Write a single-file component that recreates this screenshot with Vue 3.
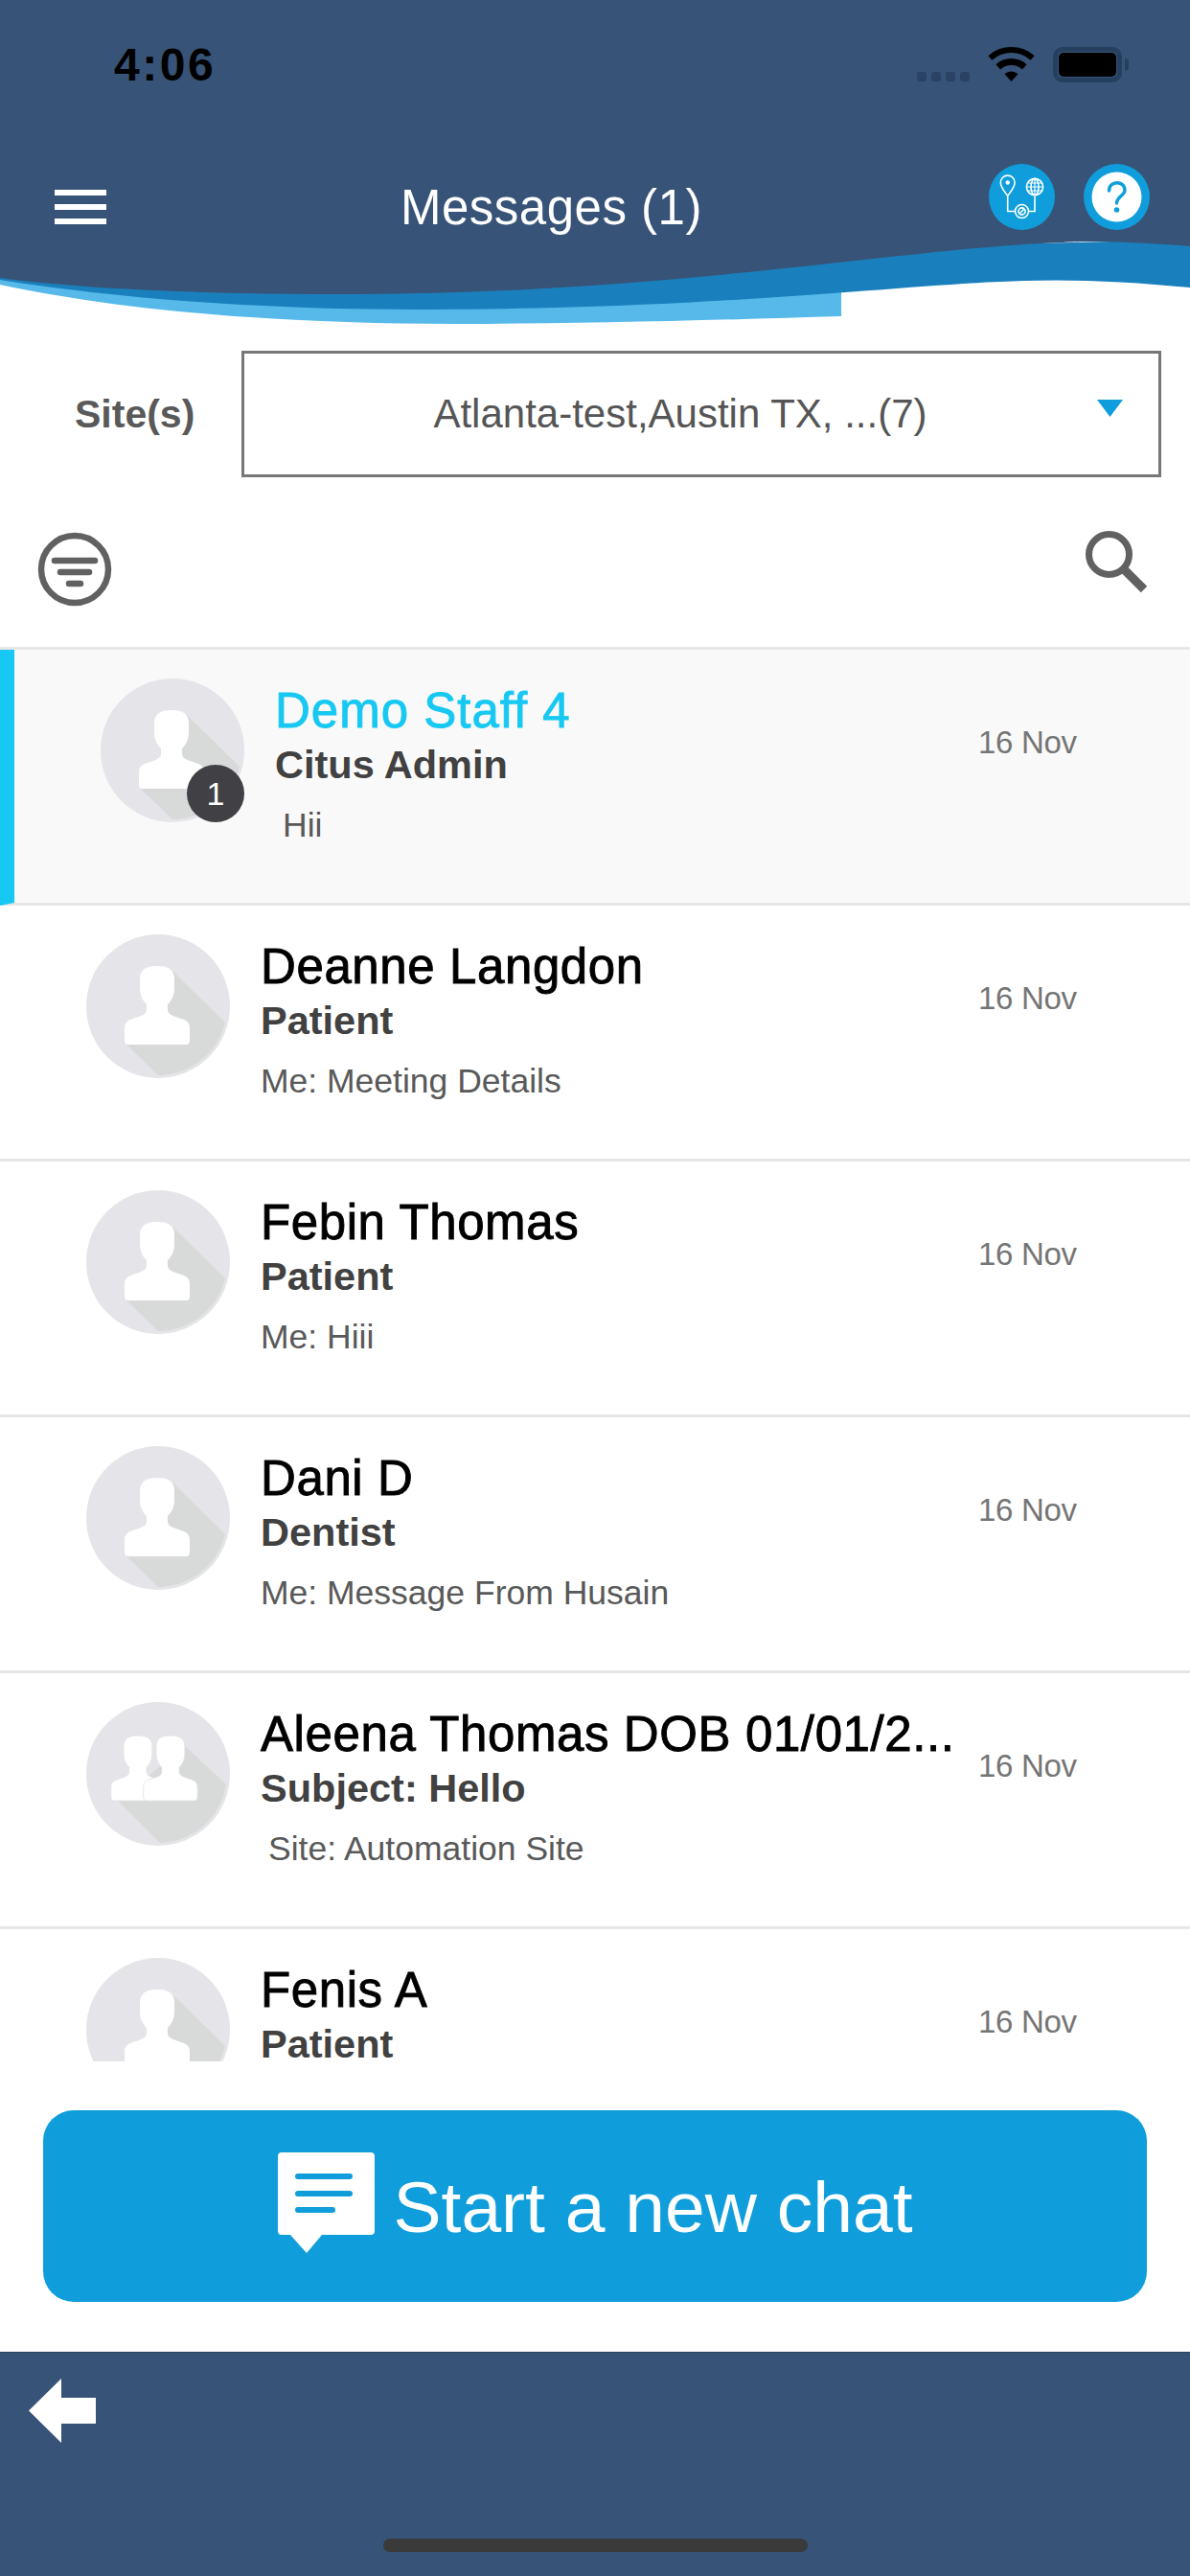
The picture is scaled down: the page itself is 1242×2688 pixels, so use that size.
<script setup>
const person = 'M74 33 C86 33 92 37 92 47 V56 C92 64 89 69 85 73 V79 C85 82 88 84 92 85.5 L102 89 C106 91 108 93 108 98 V111 Q108 115 104 115 H44 Q40 115 40 111 V98 C40 93 42 91 46 89 L56 85.5 C60 84 63 82 63 79 V73 C59 69 56 64 56 56 V47 C56 37 62 33 74 33 Z'

const rows = [
  { name: 'Demo Staff 4', role: 'Citus Admin', preview: 'Hii', active: true, badge: '1', inset: true },
  { name: 'Deanne Langdon', role: 'Patient', preview: 'Me: Meeting Details' },
  { name: 'Febin Thomas', role: 'Patient', preview: 'Me: Hiii' },
  { name: 'Dani D', role: 'Dentist', preview: 'Me: Message From Husain' },
  { name: 'Aleena Thomas DOB 01/01/2...', role: 'Subject: Hello', preview: 'Site: Automation Site', group: true, inset: true },
  { name: 'Fenis A', role: 'Patient', preview: '' }
]
</script>

<template>
  <div class="screen">
    <header class="top">
      <div class="status">
        <span class="time">4:06</span>
        <div class="status-icons">
          <div class="dots"><i></i><i></i><i></i><i></i></div>
          <svg class="wifi" width="47" height="36" viewBox="0 0 47 36">
            <path d="M-0.6 9.2 A36 36 0 0 1 47.6 9.2 L43.6 13.7 A30 30 0 0 0 3.4 13.7 Z" />
            <path d="M7.4 18.2 A24 24 0 0 1 39.6 18.2 L34.9 23.4 A17 17 0 0 0 12.1 23.4 Z" />
            <path d="M16.5 28.2 A10.5 10.5 0 0 1 30.5 28.2 L23.5 36 Z" />
          </svg>
          <div class="battery"><div class="cell"></div></div>
          <div class="nub"></div>
        </div>
      </div>
      <nav class="nav">
        <div class="burger"><i></i><i></i><i></i></div>
        <h1 class="title">Messages (1)</h1>
        <div class="nav-icons">
          <svg width="69" height="69" viewBox="0 0 69 69">
            <circle cx="34.5" cy="34.5" r="34.5" fill="#0f9edb" />
            <g fill="none" stroke="#fff" stroke-width="1.6">
              <path d="M19.7 33.5 C15 27 12.3 24 12.3 19.5 A7.4 7.4 0 0 1 27.1 19.5 C27.1 24 24.4 27 19.7 33.5 Z" />
              <circle cx="48" cy="24" r="8.6" />
              <ellipse cx="48" cy="24" rx="4" ry="8.6" />
              <path d="M48 15.4 V32.6 M39.4 24 H56.6 M40.6 20 H55.4 M40.6 28 H55.4" stroke-width="1.2" />
              <path d="M19.7 34 V49.5 H27.5 M41.5 49.5 H48 V34" />
              <circle cx="34.5" cy="49.5" r="7" />
              <circle cx="34.5" cy="49.5" r="3.6" />
              <path d="M32 52 L37 47" />
            </g>
            <circle cx="19.7" cy="19.5" r="2.2" fill="#fff" />
          </svg>
          <svg width="69" height="69" viewBox="0 0 69 69">
            <circle cx="34.5" cy="34.5" r="34.5" fill="#0f9edb" />
            <circle cx="34.5" cy="34.5" r="26" fill="#fff" />
            <path d="M26.5 28 C26.5 17 43 17 43 27.5 C43 33 34.5 34 34.5 41" fill="none" stroke="#0f9edb" stroke-width="3.4" stroke-linecap="round" />
            <circle cx="34.5" cy="48" r="2.8" fill="#0f9edb" />
          </svg>
        </div>
      </nav>
    </header>

    <svg class="wave" width="1242" height="90" viewBox="0 0 1242 90">
      <path fill="#56b9ea" d="M0 40 L878 40 L878 80 C750 84 600 88 475 88 C300 88 130 75 0 47 Z" />
      <path fill="#1a80bd" d="M0 30 L1242 0 L1242 50 C1180 44 1120 41 1069 43 C950 46 750 73 436 73 C250 73 100 58 0 42 Z" />
      <path fill="#375377" d="M0 -2 H1242 V7 C1180 2 1130 1 1109 3 C950 8 700 57 356 57 C220 57 90 52 0 40 Z" />
    </svg>

    <section class="site-row">
      <span class="site-label">Site(s)</span>
      <div class="site-box">
        <span class="site-value">Atlanta-test,Austin TX, ...(7)</span>
        <svg class="caret" width="27" height="18" viewBox="0 0 27 18"><path d="M0 0 H27 L13.5 18 Z" fill="#0f9edb" /></svg>
      </div>
    </section>

    <section class="tools">
      <svg width="78" height="78" viewBox="0 0 78 78">
        <circle cx="39" cy="39" r="35" fill="none" stroke="#616161" stroke-width="6.5" />
        <path d="M18 30 H60 M24 42 H54 M33 54 H45" stroke="#616161" stroke-width="6.5" stroke-linecap="round" />
      </svg>
      <svg width="66" height="66" viewBox="0 0 66 66">
        <circle cx="24.5" cy="24.5" r="21" fill="none" stroke="#616161" stroke-width="7" />
        <path d="M41 41 L61 61" stroke="#616161" stroke-width="9" />
      </svg>
    </section>

    <section class="list">
      <article v-for="row in rows" :key="row.name" class="row" :class="{ active: row.active }">
        <div class="avatar">
          <svg width="150" height="150" viewBox="0 0 150 150">
            <circle cx="75" cy="75" r="75" fill="#e5e5e9" />
            <template v-if="row.group">
              <path fill="#d8d9d9" d="M103 46 L146 86 A72 72 0 0 1 77 147 L33 103 Z" />
              <g fill="#fff" stroke="#e2e2e4" stroke-width="1">
                <path :d="person" transform="translate(-7.5 7.6) scale(0.83)" />
                <path :d="person" transform="translate(26.5 7.6) scale(0.83)" />
              </g>
            </template>
            <template v-else>
              <path fill="#d8d9d9" d="M90 38 L145 92 A72 72 0 0 1 75 147 L42 115 Z" />
              <path :d="person" fill="#fff" />
            </template>
          </svg>
          <span v-if="row.badge" class="badge">{{ row.badge }}</span>
        </div>
        <div class="body">
          <div class="name">{{ row.name }}</div>
          <div class="role">{{ row.role }}</div>
          <div v-if="row.preview" class="preview" :class="{ inset: row.inset }">{{ row.preview }}</div>
        </div>
        <time class="date">16 Nov</time>
      </article>
    </section>

    <section class="action">
      <button class="start" type="button">
        <svg width="101" height="105" viewBox="0 0 101 105">
          <path fill="#fff" d="M4 0 H97 Q101 0 101 4 V82 Q101 86 97 86 H46 L30 105 L13 86 H4 Q0 86 0 82 V4 Q0 0 4 0 Z" />
          <path d="M21 25 H75 M21 43 H75 M21 60 H57" stroke="#0f9edb" stroke-width="6" stroke-linecap="round" />
        </svg>
        <span class="start-label">Start a new chat</span>
      </button>
    </section>

    <footer class="bottom">
      <svg class="back" width="70" height="67" viewBox="0 0 70 67"><path fill="#fff" d="M0 33.5 L34 0 V20 H70 V47 H34 V67 Z" /></svg>
      <div class="home"></div>
    </footer>
  </div>
</template>

<style>
html, body { margin: 0; padding: 0; background: #fff; }
</style>

<style scoped>
.screen {
  width: 1242px;
  height: 2688px;
  display: flex;
  flex-direction: column;
  overflow: hidden;
  background: #fff;
  font-family: "Liberation Sans", Arial, sans-serif;
}
.top {
  height: 250px;
  flex: none;
  background: #375377;
  box-sizing: border-box;
  padding-top: 49px;
}
.status {
  height: 37px;
  display: flex;
  align-items: center;
  justify-content: space-between;
  padding-left: 119px;
  padding-right: 64px;
}
.time {
  font-size: 48px;
  line-height: 37px;
  font-weight: 700;
  color: #000;
  letter-spacing: 2.5px;
}
.status-icons { display: flex; align-items: flex-start; }
.dots { display: flex; gap: 5px; margin-top: 26px; margin-right: 20px; }
.dots i { width: 10px; height: 10px; border-radius: 3px; background: #2a4263; }
.wifi { fill: #000; margin-right: 20px; overflow: visible; }
.battery {
  width: 72px;
  height: 37px;
  box-sizing: border-box;
  border: 5px solid #25405f;
  border-radius: 10px;
  padding: 1px;
}
.cell { height: 100%; background: #000; border-radius: 5px; }
.nub { width: 4px; height: 13px; margin: 12px 0 0 3px; background: #25405f; border-radius: 0 6px 6px 0; }
.nav {
  display: flex;
  align-items: flex-start;
  margin-top: 85px;
  padding-left: 57px;
  padding-right: 42px;
}
.burger { display: flex; flex-direction: column; gap: 9px; width: 54px; margin-top: 27px; }
.burger i { display: block; height: 6px; background: #fff; }
.title {
  margin: 18px 0 0 307px;
  font-size: 51px;
  line-height: 56px;
  font-weight: 400;
  letter-spacing: 0.5px;
  color: #fff;
  white-space: nowrap;
}
.nav-icons { margin-left: auto; display: flex; gap: 30px; }
.nav-icons svg { display: block; }
.wave { display: block; flex: none; overflow: visible; }

.site-row {
  flex: none;
  display: flex;
  align-items: center;
  padding: 26px 30px 0 78px;
}
.site-label {
  width: 174px;
  font-size: 41px;
  font-weight: 700;
  color: #595959;
}
.site-box {
  width: 960px;
  height: 132px;
  box-sizing: border-box;
  border: 3px solid #777;
  display: flex;
  align-items: center;
  padding: 0 37px 0 20px;
}
.site-value {
  flex: 1;
  text-align: center;
  font-size: 42px;
  color: #555;
  white-space: nowrap;
}
.caret { align-self: flex-start; margin-top: 48px; }

.tools {
  flex: none;
  height: 177px;
  box-sizing: border-box;
  display: flex;
  justify-content: space-between;
  align-items: flex-start;
  padding: 57px 43px 0 39px;
}
.tools svg { display: block; }
.tools svg:last-child { margin-top: -1px; }

.list {
  flex: 1;
  min-height: 0;
  overflow: hidden;
  border-top: 3px solid #e6e6e6;
}
.row {
  height: 264px;
  border-bottom: 3px solid #e6e6e6;
  display: flex;
  align-items: flex-start;
  padding-left: 90px;
  padding-right: 119px;
  background: #fff;
}
.row.active {
  background: #f9f9f9;
  border-left: 15px solid #17c8f2;
}
.avatar { position: relative; flex: none; width: 150px; height: 150px; margin-top: 30px; }
.avatar svg { display: block; }
.badge {
  position: absolute;
  right: 0;
  bottom: 0;
  width: 60px;
  height: 60px;
  border-radius: 50%;
  background: #414045;
  color: #fff;
  font-size: 34px;
  line-height: 60px;
  text-align: center;
}
.body { flex: 1; min-width: 0; margin-left: 32px; padding-top: 35px; }
.name {
  font-size: 51px;
  line-height: 58px;
  letter-spacing: 0.6px;
  -webkit-text-stroke: 0.9px currentColor;
  color: #000;
  white-space: nowrap;
}
.active .name { color: #17c8f2; letter-spacing: 1px; }
.role {
  font-size: 41.5px;
  line-height: 54px;
  font-weight: 700;
  color: #414141;
  white-space: nowrap;
}
.preview {
  margin-top: 11px;
  font-size: 35.5px;
  line-height: 50px;
  color: #595959;
  white-space: nowrap;
}
.preview.inset { padding-left: 8px; }
.date {
  flex: none;
  width: 102px;
  margin-left: 35px;
  margin-top: 77px;
  font-size: 33px;
  line-height: 40px;
  letter-spacing: -0.3px;
  color: #757575;
  white-space: nowrap;
}

.action { flex: none; padding: 51px 45px 52px; }
.start {
  width: 100%;
  height: 200px;
  border: 0;
  border-radius: 32px;
  background: #0f9edb;
  display: flex;
  align-items: center;
  justify-content: center;
  gap: 20px;
  padding: 0;
  color: #fff;
  font-family: inherit;
  font-size: 75px;
}
.start svg { margin-top: -8px; }
.start-label { margin-top: 2px; }
.bottom {
  flex: none;
  height: 234px;
  box-sizing: border-box;
  background: #375377;
  border-top: 1px solid #2c415e;
  padding-top: 27px;
  display: flex;
  flex-direction: column;
}
.back { display: block; margin-left: 30px; }
.home {
  align-self: center;
  width: 443px;
  height: 14px;
  margin-top: 100px;
  border-radius: 7px;
  background: #3a3a3a;
}
</style>
